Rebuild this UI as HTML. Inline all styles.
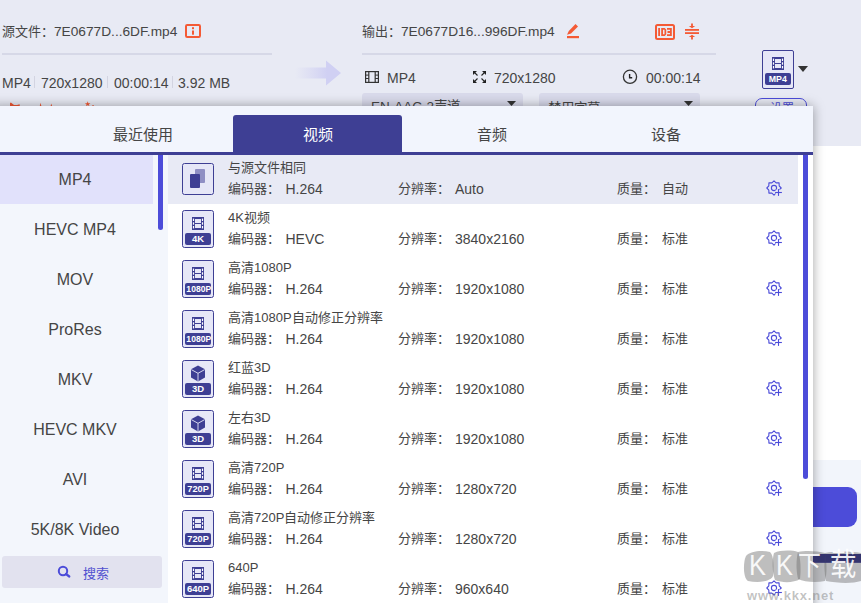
<!DOCTYPE html>
<html lang="zh-CN"><head><meta charset="utf-8">
<style>
html,body{margin:0;padding:0}
body{width:861px;height:603px;overflow:hidden;position:relative;background:#e8eaf4;font-family:"Liberation Sans",sans-serif;color:#454545}
.a{position:absolute}
.h{position:absolute;font-size:14px;line-height:18px;white-space:nowrap;color:#454545}
.t{position:absolute;font-size:13px;line-height:18px;white-space:nowrap;color:#454545}
.ib{position:absolute;border:1px solid #3e3f94;border-radius:2.5px;background:#e6e7f7}
.lab{position:absolute;width:26px;height:12px;background:#3e3f94;border-radius:2px;color:#fff;font-size:9.5px;font-weight:bold;line-height:12px;text-align:center;font-family:"Liberation Sans",sans-serif}
.lab span{display:inline-block;transform-origin:50% 50%}
.st{position:absolute;left:0;width:150px;height:50px;line-height:50px;text-align:center;font-size:16px;color:#454545}
.wm{font-size:30px;line-height:34px;color:rgba(255,255,255,0.92);transform:scaleX(0.85);transform-origin:0 0}
.tab{position:absolute;top:116px;height:37px;line-height:37px;font-size:15px;text-align:center;color:#454545}
</style></head><body>
<!-- header -->
<div class="h" style="left:2px;top:23px;font-size:13px">源文件：</div>
<div class="h" style="left:54px;top:23px;font-size:13.7px">7E0677D...6DF.mp4</div>
<svg class="a" style="left:185px;top:24px" width="16" height="14" viewBox="0 0 16 14"><rect x="1" y="1" width="14" height="12" rx="1.2" fill="none" stroke="#f45a35" stroke-width="2"/><rect x="7" y="3.2" width="2" height="2" fill="#f45a35"/><rect x="7" y="6.5" width="2" height="4.2" fill="#f45a35"/></svg>
<div class="a" style="left:2px;top:53px;width:270px;height:2px;background:#d6d8e7"></div>
<div class="h" style="left:362px;top:23px;font-size:13px">输出：</div>
<div class="h" style="left:401px;top:23px;font-size:13.7px">7E0677D16...996DF.mp4</div>
<svg class="a" style="left:566px;top:23px" width="14" height="16" viewBox="0 0 14 16"><polygon points="1,11.8 2.8,8 9.5,1 12,3.5 5,10.6" fill="#f45a35"/><rect x="1" y="13" width="12" height="2.2" fill="#f45a35"/></svg>
<svg class="a" style="left:655px;top:24px" width="20" height="16" viewBox="0 0 20 16"><rect x="1" y="1" width="18" height="14" rx="1.5" fill="none" stroke="#f45a35" stroke-width="2"/><rect x="3.2" y="4" width="1.8" height="8" fill="#f45a35"/><path d="M6.2 4h3.5l1.5 1.5v5l-1.5 1.5h-3.5z M8 5.8v4.4h1.5v-4.4z" fill="#f45a35" fill-rule="evenodd"/><path d="M12 4h4.8v8h-4.8v-1.8h3v-1.3h-2.5v-1.8h2.5v-1.3h-3z" fill="#f45a35"/></svg>
<svg class="a" style="left:684px;top:23px" width="16" height="17" viewBox="0 0 16 17"><rect x="1" y="6" width="14" height="1.8" fill="#f45a35"/><rect x="1" y="9.2" width="14" height="1.8" fill="#f45a35"/><rect x="7.1" y="0.5" width="1.8" height="3" fill="#f45a35"/><polygon points="4.8,3 11.2,3 8,5.3" fill="#f45a35"/><rect x="7.1" y="13.5" width="1.8" height="3" fill="#f45a35"/><polygon points="4.8,14 11.2,14 8,11.7" fill="#f45a35"/></svg>
<div class="a" style="left:362px;top:53px;width:354px;height:2px;background:#d6d8e7"></div>

<div class="h" style="left:2px;top:74px">MP4</div>
<div class="a" style="left:34px;top:76px;width:1px;height:12px;background:#d3d4e1"></div>
<div class="h" style="left:41px;top:74px">720x1280</div>
<div class="a" style="left:107px;top:76px;width:1px;height:12px;background:#d3d4e1"></div>
<div class="h" style="left:114px;top:74px">00:00:14</div>
<div class="a" style="left:172px;top:76px;width:1px;height:12px;background:#d3d4e1"></div>
<div class="h" style="left:178px;top:74px">3.92 MB</div>

<svg class="a" style="left:295px;top:60px" width="47" height="26" viewBox="0 0 47 26"><defs><linearGradient id="ag" x1="0" x2="1"><stop offset="0" stop-color="#d4d4f3" stop-opacity="0"/><stop offset="0.7" stop-color="#d0d0f3"/></linearGradient></defs><path d="M0 7.5h31v-7l15 12.5l-15 12.5v-7h-31z" fill="url(#ag)"/></svg>

<svg class="a" style="left:365px;top:71px" width="14" height="12" viewBox="0 0 14 12"><rect x="0.6" y="0.6" width="12.8" height="10.8" fill="none" stroke="#333" stroke-width="1.2"/><line x1="3.8" y1="0" x2="3.8" y2="12" stroke="#333" stroke-width="1.2"/><line x1="10.2" y1="0" x2="10.2" y2="12" stroke="#333" stroke-width="1.2"/><line x1="0" y1="4.1" x2="3.8" y2="4.1" stroke="#333" stroke-width="1"/><line x1="0" y1="7.5" x2="3.8" y2="7.5" stroke="#333" stroke-width="1"/><line x1="10.2" y1="4.1" x2="14" y2="4.1" stroke="#333" stroke-width="1"/><line x1="10.2" y1="7.5" x2="14" y2="7.5" stroke="#333" stroke-width="1"/></svg>
<div class="h" style="left:387px;top:69px">MP4</div>
<svg class="a" style="left:472px;top:70px" width="15" height="14" viewBox="0 0 15 14"><g fill="#222"><polygon points="1,1 5,1 1,5"/><polygon points="14,1 10,1 14,5"/><polygon points="1,13 5,13 1,9"/><polygon points="14,13 10,13 14,9"/></g><g stroke="#222" stroke-width="1.1"><line x1="2" y1="2" x2="5.5" y2="5.5"/><line x1="13" y1="2" x2="9.5" y2="5.5"/><line x1="2" y1="12" x2="5.5" y2="8.5"/><line x1="13" y1="12" x2="9.5" y2="8.5"/></g></svg>
<div class="h" style="left:494px;top:69px">720x1280</div>
<svg class="a" style="left:622px;top:69px" width="16" height="16" viewBox="0 0 16 16"><circle cx="8" cy="7.8" r="6.6" fill="none" stroke="#333" stroke-width="1.3"/><polyline points="7.6,5 7.6,8.8 10.2,8.8" fill="none" stroke="#222" stroke-width="1.4"/></svg>
<div class="h" style="left:646px;top:69px">00:00:14</div>

<div class="a" style="left:762px;top:50px;width:30px;height:37px;border:1px solid #3e3f94;border-radius:2px;background:#e6e7f7"></div>
<svg style="position:absolute;left:772px;top:57px" width="12" height="13" viewBox="0 0 12 13">
<rect x="0" y="0" width="12" height="13" fill="#3e3f94"/>
<rect x="0.9" y="1.6" width="1.2" height="2.4" fill="#fff"/><rect x="0.9" y="5.3" width="1.2" height="2.4" fill="#fff"/><rect x="0.9" y="9" width="1.2" height="2.4" fill="#fff"/>
<rect x="9.9" y="1.6" width="1.2" height="2.4" fill="#fff"/><rect x="9.9" y="5.3" width="1.2" height="2.4" fill="#fff"/><rect x="9.9" y="9" width="1.2" height="2.4" fill="#fff"/>
<rect x="3" y="2" width="6" height="4" fill="#e6e7f7"/><rect x="3" y="7" width="6" height="4" fill="#e6e7f7"/>
</svg>
<div class="lab" style="left:765px;top:73px;width:26px;height:12px"><span style="transform:scaleX(0.92)">MP4</span></div>
<svg class="a" style="left:798px;top:66px" width="10" height="6" viewBox="0 0 10 6"><polygon points="0,0 10,0 5,6" fill="#333"/></svg>

<div class="a" style="left:362px;top:93px;width:161px;height:30px;border-radius:3px;background:#d9daeb"></div>
<div class="h" style="left:371px;top:98px;font-size:13.5px">EN-AAC-2声道</div>
<svg class="a" style="left:507px;top:101px" width="9" height="5" viewBox="0 0 9 5"><polygon points="0,0 9,0 4.5,5" fill="#333"/></svg>
<div class="a" style="left:539px;top:93px;width:161px;height:30px;border-radius:3px;background:#d9daeb"></div>
<div class="h" style="left:548px;top:100px;font-size:13.5px">禁用字幕</div>
<svg class="a" style="left:684px;top:101px" width="9" height="5" viewBox="0 0 9 5"><polygon points="0,0 9,0 4.5,5" fill="#333"/></svg>
<div class="a" style="left:755px;top:98px;width:50px;height:24px;border:1.5px solid #4c4cd9;border-radius:7px"></div>
<div class="h" style="left:770px;top:99.5px;font-size:12px;color:#4c4cd9">设置</div>
<svg class="a" style="left:0px;top:94px" width="100" height="12" viewBox="0 0 100 12"><g fill="#f45a35"><polygon points="10,8.8 11.2,8.8 14,11 17,11 19.6,10.2 19.8,12 10,12"/><polygon points="39.8,12 40.4,8.8 41.4,12"/><polygon points="50.6,12 51.3,9.5 52.1,12"/><polygon points="87.7,7.2 88.4,9.2 90.5,9.2 88.8,10.4 89.5,12 87.7,11.2 85.9,12 86.6,10.4 84.9,9.2 87,9.2"/><rect x="92.3" y="11.2" width="1.5" height="0.8"/></g></svg>

<!-- right area -->
<div class="a" style="left:813px;top:146px;width:48px;height:314px;background:#fff"></div>
<div class="a" style="left:813px;top:460px;width:48px;height:143px;background:#f2f5fb"></div>
<div class="a" style="left:780px;top:487px;width:77px;height:40px;border-radius:9px;background:#4c4cd9"></div>
<div class="a" style="left:813px;top:554px;width:48px;height:8px;background:#2e2e6e"></div>

<!-- popup -->
<div class="a" style="left:-10px;top:106px;width:823px;height:520px;background:#fff;box-shadow:0 0 11px rgba(0,0,0,0.36)"></div>
<div class="a" style="left:0;top:106px;width:813px;height:46px;background:#f2f5fd"></div>
<div class="a" style="left:233px;top:115px;width:169px;height:37px;background:#3e3f94;border-radius:3px 3px 0 0"></div>
<div class="tab" style="left:56px;width:174px">最近使用</div>
<div class="tab" style="left:233px;width:169px;color:#fff">视频</div>
<div class="tab" style="left:405px;width:174px">音频</div>
<div class="tab" style="left:579px;width:174px">设备</div>
<div class="a" style="left:0;top:152px;width:813px;height:3px;background:#3e3f94"></div>

<div class="a" style="left:0;top:155px;width:168px;height:448px;background:#f3f6fc"></div>
<div class="a" style="left:0;top:155px;width:153px;height:49px;background:#e1e1fb"></div>
<div class="a" style="left:158px;top:155px;width:5px;height:75px;border-radius:0 0 2.5px 2.5px;background:#4c4cd9"></div>
<div class="a" style="left:0;top:152px;width:813px;height:3px;background:#3e3f94"></div>
<div class="st" style="top:155px">MP4</div><div class="st" style="top:205px">HEVC MP4</div><div class="st" style="top:255px">MOV</div><div class="st" style="top:305px">ProRes</div><div class="st" style="top:355px">MKV</div><div class="st" style="top:405px">HEVC MKV</div><div class="st" style="top:455px">AVI</div><div class="st" style="top:505px">5K/8K Video</div>
<div class="a" style="left:2px;top:556px;width:160px;height:32px;border-radius:3px;background:#e2e2ef"></div>
<svg class="a" style="left:56px;top:564px" width="16" height="16" viewBox="0 0 16 16"><circle cx="7" cy="7" r="4.2" fill="none" stroke="#4c4cd9" stroke-width="2"/><line x1="10" y1="10" x2="13.3" y2="12.5" stroke="#4c4cd9" stroke-width="2.2" stroke-linecap="round"/></svg>
<div class="a" style="left:83px;top:564.5px;font-size:13px;line-height:18px;color:#5050d0">搜索</div>

<div class="a" style="left:168px;top:155px;width:630px;height:49px;background:#e8eaf5"></div><div class="ib" style="left:182px;top:163px;width:30px;height:30px"></div>
<div class="a" style="left:195px;top:169px;width:10px;height:14px;background:#8f8fc4;border-radius:1px"></div>
<div class="a" style="left:190px;top:174px;width:10px;height:14px;background:#3e3f94;border-radius:1px"></div><div class="t" style="left:228px;top:159px">与源文件相同</div><div class="t" style="left:228px;top:180px">编码器：</div><div class="t" style="left:285.5px;top:180px;font-size:14px">H.264</div><div class="t" style="left:397.8px;top:180px">分辨率：</div><div class="t" style="left:455px;top:180px;font-size:14px">Auto</div><div class="t" style="left:617.4px;top:180px">质量：</div><div class="t" style="left:662px;top:180px">自动</div><svg style="position:absolute;left:766px;top:180px" width="20" height="20" viewBox="0 0 20 20">
<polygon points="8.00,0.80 5.86,2.83 2.91,2.91 2.83,5.86 0.80,8.00 2.83,10.14 2.91,13.09 5.86,13.17 8.00,15.20 10.14,13.17 13.09,13.09 13.17,10.14 15.20,8.00 13.17,5.86 13.09,2.91 10.14,2.83" fill="none" stroke="#4c4cd9" stroke-width="1.1" stroke-linejoin="round"/>
<circle cx="8" cy="8" r="2.6" fill="none" stroke="#4c4cd9" stroke-width="1.1"/>
<rect x="9.6" y="9.6" width="6" height="6" fill="#e8eaf5" class="gbg"/>
<line x1="9.1" y1="12.5" x2="15.9" y2="12.5" stroke="#4c4cd9" stroke-width="1.1"/>
<line x1="12.5" y1="9.1" x2="12.5" y2="15.9" stroke="#4c4cd9" stroke-width="1.1"/>
</svg><div class="ib" style="left:182px;top:210px;width:30px;height:36px"></div><svg style="position:absolute;left:192px;top:217px" width="12" height="13" viewBox="0 0 12 13">
<rect x="0" y="0" width="12" height="13" fill="#3e3f94"/>
<rect x="0.9" y="1.6" width="1.2" height="2.4" fill="#fff"/><rect x="0.9" y="5.3" width="1.2" height="2.4" fill="#fff"/><rect x="0.9" y="9" width="1.2" height="2.4" fill="#fff"/>
<rect x="9.9" y="1.6" width="1.2" height="2.4" fill="#fff"/><rect x="9.9" y="5.3" width="1.2" height="2.4" fill="#fff"/><rect x="9.9" y="9" width="1.2" height="2.4" fill="#fff"/>
<rect x="3" y="2" width="6" height="4" fill="#e6e7f7"/><rect x="3" y="7" width="6" height="4" fill="#e6e7f7"/>
</svg><div class="lab" style="left:185px;top:233px"><span style="transform:scaleX(1)">4K</span></div><div class="t" style="left:228px;top:209px">4K视频</div><div class="t" style="left:228px;top:230px">编码器：</div><div class="t" style="left:285.5px;top:230px;font-size:14px">HEVC</div><div class="t" style="left:397.8px;top:230px">分辨率：</div><div class="t" style="left:455px;top:230px;font-size:14px">3840x2160</div><div class="t" style="left:617.4px;top:230px">质量：</div><div class="t" style="left:662px;top:230px">标准</div><svg style="position:absolute;left:766px;top:230px" width="20" height="20" viewBox="0 0 20 20">
<polygon points="8.00,0.80 5.86,2.83 2.91,2.91 2.83,5.86 0.80,8.00 2.83,10.14 2.91,13.09 5.86,13.17 8.00,15.20 10.14,13.17 13.09,13.09 13.17,10.14 15.20,8.00 13.17,5.86 13.09,2.91 10.14,2.83" fill="none" stroke="#4c4cd9" stroke-width="1.1" stroke-linejoin="round"/>
<circle cx="8" cy="8" r="2.6" fill="none" stroke="#4c4cd9" stroke-width="1.1"/>
<rect x="9.6" y="9.6" width="6" height="6" fill="#fff" class="gbg"/>
<line x1="9.1" y1="12.5" x2="15.9" y2="12.5" stroke="#4c4cd9" stroke-width="1.1"/>
<line x1="12.5" y1="9.1" x2="12.5" y2="15.9" stroke="#4c4cd9" stroke-width="1.1"/>
</svg><div class="ib" style="left:182px;top:260px;width:30px;height:36px"></div><svg style="position:absolute;left:192px;top:267px" width="12" height="13" viewBox="0 0 12 13">
<rect x="0" y="0" width="12" height="13" fill="#3e3f94"/>
<rect x="0.9" y="1.6" width="1.2" height="2.4" fill="#fff"/><rect x="0.9" y="5.3" width="1.2" height="2.4" fill="#fff"/><rect x="0.9" y="9" width="1.2" height="2.4" fill="#fff"/>
<rect x="9.9" y="1.6" width="1.2" height="2.4" fill="#fff"/><rect x="9.9" y="5.3" width="1.2" height="2.4" fill="#fff"/><rect x="9.9" y="9" width="1.2" height="2.4" fill="#fff"/>
<rect x="3" y="2" width="6" height="4" fill="#e6e7f7"/><rect x="3" y="7" width="6" height="4" fill="#e6e7f7"/>
</svg><div class="lab" style="left:185px;top:283px"><span style="transform:scaleX(0.9)">1080P</span></div><div class="t" style="left:228px;top:259px">高清1080P</div><div class="t" style="left:228px;top:280px">编码器：</div><div class="t" style="left:285.5px;top:280px;font-size:14px">H.264</div><div class="t" style="left:397.8px;top:280px">分辨率：</div><div class="t" style="left:455px;top:280px;font-size:14px">1920x1080</div><div class="t" style="left:617.4px;top:280px">质量：</div><div class="t" style="left:662px;top:280px">标准</div><svg style="position:absolute;left:766px;top:280px" width="20" height="20" viewBox="0 0 20 20">
<polygon points="8.00,0.80 5.86,2.83 2.91,2.91 2.83,5.86 0.80,8.00 2.83,10.14 2.91,13.09 5.86,13.17 8.00,15.20 10.14,13.17 13.09,13.09 13.17,10.14 15.20,8.00 13.17,5.86 13.09,2.91 10.14,2.83" fill="none" stroke="#4c4cd9" stroke-width="1.1" stroke-linejoin="round"/>
<circle cx="8" cy="8" r="2.6" fill="none" stroke="#4c4cd9" stroke-width="1.1"/>
<rect x="9.6" y="9.6" width="6" height="6" fill="#fff" class="gbg"/>
<line x1="9.1" y1="12.5" x2="15.9" y2="12.5" stroke="#4c4cd9" stroke-width="1.1"/>
<line x1="12.5" y1="9.1" x2="12.5" y2="15.9" stroke="#4c4cd9" stroke-width="1.1"/>
</svg><div class="ib" style="left:182px;top:310px;width:30px;height:36px"></div><svg style="position:absolute;left:192px;top:317px" width="12" height="13" viewBox="0 0 12 13">
<rect x="0" y="0" width="12" height="13" fill="#3e3f94"/>
<rect x="0.9" y="1.6" width="1.2" height="2.4" fill="#fff"/><rect x="0.9" y="5.3" width="1.2" height="2.4" fill="#fff"/><rect x="0.9" y="9" width="1.2" height="2.4" fill="#fff"/>
<rect x="9.9" y="1.6" width="1.2" height="2.4" fill="#fff"/><rect x="9.9" y="5.3" width="1.2" height="2.4" fill="#fff"/><rect x="9.9" y="9" width="1.2" height="2.4" fill="#fff"/>
<rect x="3" y="2" width="6" height="4" fill="#e6e7f7"/><rect x="3" y="7" width="6" height="4" fill="#e6e7f7"/>
</svg><div class="lab" style="left:185px;top:333px"><span style="transform:scaleX(0.9)">1080P</span></div><div class="t" style="left:228px;top:309px">高清1080P自动修正分辨率</div><div class="t" style="left:228px;top:330px">编码器：</div><div class="t" style="left:285.5px;top:330px;font-size:14px">H.264</div><div class="t" style="left:397.8px;top:330px">分辨率：</div><div class="t" style="left:455px;top:330px;font-size:14px">1920x1080</div><div class="t" style="left:617.4px;top:330px">质量：</div><div class="t" style="left:662px;top:330px">标准</div><svg style="position:absolute;left:766px;top:330px" width="20" height="20" viewBox="0 0 20 20">
<polygon points="8.00,0.80 5.86,2.83 2.91,2.91 2.83,5.86 0.80,8.00 2.83,10.14 2.91,13.09 5.86,13.17 8.00,15.20 10.14,13.17 13.09,13.09 13.17,10.14 15.20,8.00 13.17,5.86 13.09,2.91 10.14,2.83" fill="none" stroke="#4c4cd9" stroke-width="1.1" stroke-linejoin="round"/>
<circle cx="8" cy="8" r="2.6" fill="none" stroke="#4c4cd9" stroke-width="1.1"/>
<rect x="9.6" y="9.6" width="6" height="6" fill="#fff" class="gbg"/>
<line x1="9.1" y1="12.5" x2="15.9" y2="12.5" stroke="#4c4cd9" stroke-width="1.1"/>
<line x1="12.5" y1="9.1" x2="12.5" y2="15.9" stroke="#4c4cd9" stroke-width="1.1"/>
</svg><div class="ib" style="left:182px;top:360px;width:30px;height:36px"></div><svg style="position:absolute;left:190px;top:365px" width="16" height="17" viewBox="0 0 16 17">
<polygon points="8,0.5 15,4.3 15,12.5 8,16.5 1,12.5 1,4.3" fill="#3e3f94"/>
<polyline points="1.3,4.6 8,8.3 14.7,4.6" fill="none" stroke="#e6e7f7" stroke-width="0.9"/>
<line x1="8" y1="8.3" x2="8" y2="16.3" stroke="#e6e7f7" stroke-width="0.9"/>
</svg><div class="lab" style="left:185px;top:383px"><span style="transform:scaleX(1)">3D</span></div><div class="t" style="left:228px;top:359px">红蓝3D</div><div class="t" style="left:228px;top:380px">编码器：</div><div class="t" style="left:285.5px;top:380px;font-size:14px">H.264</div><div class="t" style="left:397.8px;top:380px">分辨率：</div><div class="t" style="left:455px;top:380px;font-size:14px">1920x1080</div><div class="t" style="left:617.4px;top:380px">质量：</div><div class="t" style="left:662px;top:380px">标准</div><svg style="position:absolute;left:766px;top:380px" width="20" height="20" viewBox="0 0 20 20">
<polygon points="8.00,0.80 5.86,2.83 2.91,2.91 2.83,5.86 0.80,8.00 2.83,10.14 2.91,13.09 5.86,13.17 8.00,15.20 10.14,13.17 13.09,13.09 13.17,10.14 15.20,8.00 13.17,5.86 13.09,2.91 10.14,2.83" fill="none" stroke="#4c4cd9" stroke-width="1.1" stroke-linejoin="round"/>
<circle cx="8" cy="8" r="2.6" fill="none" stroke="#4c4cd9" stroke-width="1.1"/>
<rect x="9.6" y="9.6" width="6" height="6" fill="#fff" class="gbg"/>
<line x1="9.1" y1="12.5" x2="15.9" y2="12.5" stroke="#4c4cd9" stroke-width="1.1"/>
<line x1="12.5" y1="9.1" x2="12.5" y2="15.9" stroke="#4c4cd9" stroke-width="1.1"/>
</svg><div class="ib" style="left:182px;top:410px;width:30px;height:36px"></div><svg style="position:absolute;left:190px;top:415px" width="16" height="17" viewBox="0 0 16 17">
<polygon points="8,0.5 15,4.3 15,12.5 8,16.5 1,12.5 1,4.3" fill="#3e3f94"/>
<polyline points="1.3,4.6 8,8.3 14.7,4.6" fill="none" stroke="#e6e7f7" stroke-width="0.9"/>
<line x1="8" y1="8.3" x2="8" y2="16.3" stroke="#e6e7f7" stroke-width="0.9"/>
</svg><div class="lab" style="left:185px;top:433px"><span style="transform:scaleX(1)">3D</span></div><div class="t" style="left:228px;top:409px">左右3D</div><div class="t" style="left:228px;top:430px">编码器：</div><div class="t" style="left:285.5px;top:430px;font-size:14px">H.264</div><div class="t" style="left:397.8px;top:430px">分辨率：</div><div class="t" style="left:455px;top:430px;font-size:14px">1920x1080</div><div class="t" style="left:617.4px;top:430px">质量：</div><div class="t" style="left:662px;top:430px">标准</div><svg style="position:absolute;left:766px;top:430px" width="20" height="20" viewBox="0 0 20 20">
<polygon points="8.00,0.80 5.86,2.83 2.91,2.91 2.83,5.86 0.80,8.00 2.83,10.14 2.91,13.09 5.86,13.17 8.00,15.20 10.14,13.17 13.09,13.09 13.17,10.14 15.20,8.00 13.17,5.86 13.09,2.91 10.14,2.83" fill="none" stroke="#4c4cd9" stroke-width="1.1" stroke-linejoin="round"/>
<circle cx="8" cy="8" r="2.6" fill="none" stroke="#4c4cd9" stroke-width="1.1"/>
<rect x="9.6" y="9.6" width="6" height="6" fill="#fff" class="gbg"/>
<line x1="9.1" y1="12.5" x2="15.9" y2="12.5" stroke="#4c4cd9" stroke-width="1.1"/>
<line x1="12.5" y1="9.1" x2="12.5" y2="15.9" stroke="#4c4cd9" stroke-width="1.1"/>
</svg><div class="ib" style="left:182px;top:460px;width:30px;height:36px"></div><svg style="position:absolute;left:192px;top:467px" width="12" height="13" viewBox="0 0 12 13">
<rect x="0" y="0" width="12" height="13" fill="#3e3f94"/>
<rect x="0.9" y="1.6" width="1.2" height="2.4" fill="#fff"/><rect x="0.9" y="5.3" width="1.2" height="2.4" fill="#fff"/><rect x="0.9" y="9" width="1.2" height="2.4" fill="#fff"/>
<rect x="9.9" y="1.6" width="1.2" height="2.4" fill="#fff"/><rect x="9.9" y="5.3" width="1.2" height="2.4" fill="#fff"/><rect x="9.9" y="9" width="1.2" height="2.4" fill="#fff"/>
<rect x="3" y="2" width="6" height="4" fill="#e6e7f7"/><rect x="3" y="7" width="6" height="4" fill="#e6e7f7"/>
</svg><div class="lab" style="left:185px;top:483px"><span style="transform:scaleX(0.97)">720P</span></div><div class="t" style="left:228px;top:459px">高清720P</div><div class="t" style="left:228px;top:480px">编码器：</div><div class="t" style="left:285.5px;top:480px;font-size:14px">H.264</div><div class="t" style="left:397.8px;top:480px">分辨率：</div><div class="t" style="left:455px;top:480px;font-size:14px">1280x720</div><div class="t" style="left:617.4px;top:480px">质量：</div><div class="t" style="left:662px;top:480px">标准</div><svg style="position:absolute;left:766px;top:480px" width="20" height="20" viewBox="0 0 20 20">
<polygon points="8.00,0.80 5.86,2.83 2.91,2.91 2.83,5.86 0.80,8.00 2.83,10.14 2.91,13.09 5.86,13.17 8.00,15.20 10.14,13.17 13.09,13.09 13.17,10.14 15.20,8.00 13.17,5.86 13.09,2.91 10.14,2.83" fill="none" stroke="#4c4cd9" stroke-width="1.1" stroke-linejoin="round"/>
<circle cx="8" cy="8" r="2.6" fill="none" stroke="#4c4cd9" stroke-width="1.1"/>
<rect x="9.6" y="9.6" width="6" height="6" fill="#fff" class="gbg"/>
<line x1="9.1" y1="12.5" x2="15.9" y2="12.5" stroke="#4c4cd9" stroke-width="1.1"/>
<line x1="12.5" y1="9.1" x2="12.5" y2="15.9" stroke="#4c4cd9" stroke-width="1.1"/>
</svg><div class="ib" style="left:182px;top:510px;width:30px;height:36px"></div><svg style="position:absolute;left:192px;top:517px" width="12" height="13" viewBox="0 0 12 13">
<rect x="0" y="0" width="12" height="13" fill="#3e3f94"/>
<rect x="0.9" y="1.6" width="1.2" height="2.4" fill="#fff"/><rect x="0.9" y="5.3" width="1.2" height="2.4" fill="#fff"/><rect x="0.9" y="9" width="1.2" height="2.4" fill="#fff"/>
<rect x="9.9" y="1.6" width="1.2" height="2.4" fill="#fff"/><rect x="9.9" y="5.3" width="1.2" height="2.4" fill="#fff"/><rect x="9.9" y="9" width="1.2" height="2.4" fill="#fff"/>
<rect x="3" y="2" width="6" height="4" fill="#e6e7f7"/><rect x="3" y="7" width="6" height="4" fill="#e6e7f7"/>
</svg><div class="lab" style="left:185px;top:533px"><span style="transform:scaleX(0.97)">720P</span></div><div class="t" style="left:228px;top:509px">高清720P自动修正分辨率</div><div class="t" style="left:228px;top:530px">编码器：</div><div class="t" style="left:285.5px;top:530px;font-size:14px">H.264</div><div class="t" style="left:397.8px;top:530px">分辨率：</div><div class="t" style="left:455px;top:530px;font-size:14px">1280x720</div><div class="t" style="left:617.4px;top:530px">质量：</div><div class="t" style="left:662px;top:530px">标准</div><svg style="position:absolute;left:766px;top:530px" width="20" height="20" viewBox="0 0 20 20">
<polygon points="8.00,0.80 5.86,2.83 2.91,2.91 2.83,5.86 0.80,8.00 2.83,10.14 2.91,13.09 5.86,13.17 8.00,15.20 10.14,13.17 13.09,13.09 13.17,10.14 15.20,8.00 13.17,5.86 13.09,2.91 10.14,2.83" fill="none" stroke="#4c4cd9" stroke-width="1.1" stroke-linejoin="round"/>
<circle cx="8" cy="8" r="2.6" fill="none" stroke="#4c4cd9" stroke-width="1.1"/>
<rect x="9.6" y="9.6" width="6" height="6" fill="#fff" class="gbg"/>
<line x1="9.1" y1="12.5" x2="15.9" y2="12.5" stroke="#4c4cd9" stroke-width="1.1"/>
<line x1="12.5" y1="9.1" x2="12.5" y2="15.9" stroke="#4c4cd9" stroke-width="1.1"/>
</svg><div class="ib" style="left:182px;top:560px;width:30px;height:36px"></div><svg style="position:absolute;left:192px;top:567px" width="12" height="13" viewBox="0 0 12 13">
<rect x="0" y="0" width="12" height="13" fill="#3e3f94"/>
<rect x="0.9" y="1.6" width="1.2" height="2.4" fill="#fff"/><rect x="0.9" y="5.3" width="1.2" height="2.4" fill="#fff"/><rect x="0.9" y="9" width="1.2" height="2.4" fill="#fff"/>
<rect x="9.9" y="1.6" width="1.2" height="2.4" fill="#fff"/><rect x="9.9" y="5.3" width="1.2" height="2.4" fill="#fff"/><rect x="9.9" y="9" width="1.2" height="2.4" fill="#fff"/>
<rect x="3" y="2" width="6" height="4" fill="#e6e7f7"/><rect x="3" y="7" width="6" height="4" fill="#e6e7f7"/>
</svg><div class="lab" style="left:185px;top:583px"><span style="transform:scaleX(1.0)">640P</span></div><div class="t" style="left:228px;top:559px">640P</div><div class="t" style="left:228px;top:580px">编码器：</div><div class="t" style="left:285.5px;top:580px;font-size:14px">H.264</div><div class="t" style="left:397.8px;top:580px">分辨率：</div><div class="t" style="left:455px;top:580px;font-size:14px">960x640</div><div class="t" style="left:617.4px;top:580px">质量：</div><div class="t" style="left:662px;top:580px">标准</div><svg style="position:absolute;left:766px;top:580px" width="20" height="20" viewBox="0 0 20 20">
<polygon points="8.00,0.80 5.86,2.83 2.91,2.91 2.83,5.86 0.80,8.00 2.83,10.14 2.91,13.09 5.86,13.17 8.00,15.20 10.14,13.17 13.09,13.09 13.17,10.14 15.20,8.00 13.17,5.86 13.09,2.91 10.14,2.83" fill="none" stroke="#4c4cd9" stroke-width="1.1" stroke-linejoin="round"/>
<circle cx="8" cy="8" r="2.6" fill="none" stroke="#4c4cd9" stroke-width="1.1"/>
<rect x="9.6" y="9.6" width="6" height="6" fill="#fff" class="gbg"/>
<line x1="9.1" y1="12.5" x2="15.9" y2="12.5" stroke="#4c4cd9" stroke-width="1.1"/>
<line x1="12.5" y1="9.1" x2="12.5" y2="15.9" stroke="#4c4cd9" stroke-width="1.1"/>
</svg>
<div class="a" style="left:803px;top:155px;width:5px;height:324px;border-radius:0 0 2.5px 2.5px;background:#4c4cd9"></div>
<div class="a" style="left:0;top:152px;width:813px;height:3px;background:#3e3f94"></div>

<!-- watermark -->
<svg class="a" style="left:740px;top:548px" width="121" height="38" viewBox="0 0 121 38"><g fill="rgba(110,110,110,0.45)">
<path d="M6,8 C10,3 22,2 30,4 C34,8 34,20 33,28 C30,34 18,35 8,33 C3,30 3,14 6,8z"/>
<path d="M34,5 C40,2 52,2 58,4 C61,10 61,24 60,31 C54,35 42,35 35,32 C32,24 32,12 34,5z"/>
<path d="M58,4 C66,2 78,3 85,5 C87,14 87,26 85,33 C76,35 64,34 58,31 C56,22 56,12 58,4z"/>
<path d="M85,5 C95,3 110,3 121,5 L121,33 C112,36 96,35 86,33 C84,24 84,14 85,5z"/>
</g></svg>
<div class="a" style="left:813px;top:554px;width:48px;height:9px;background:rgba(46,46,110,0.8)"></div>
<div class="a wm" style="left:749px;top:548px">K</div><div class="a wm" style="left:776px;top:548px">K</div><div class="a wm" style="left:798px;top:549px;font-size:27px">下</div><div class="a wm" style="left:830px;top:548px;font-size:31px">载</div>
<div class="a" style="left:747px;top:588px;font-size:13px;line-height:16px;color:rgba(120,120,120,0.45);font-weight:bold;letter-spacing:0.8px">www.kkx.net</div>
</body></html>
